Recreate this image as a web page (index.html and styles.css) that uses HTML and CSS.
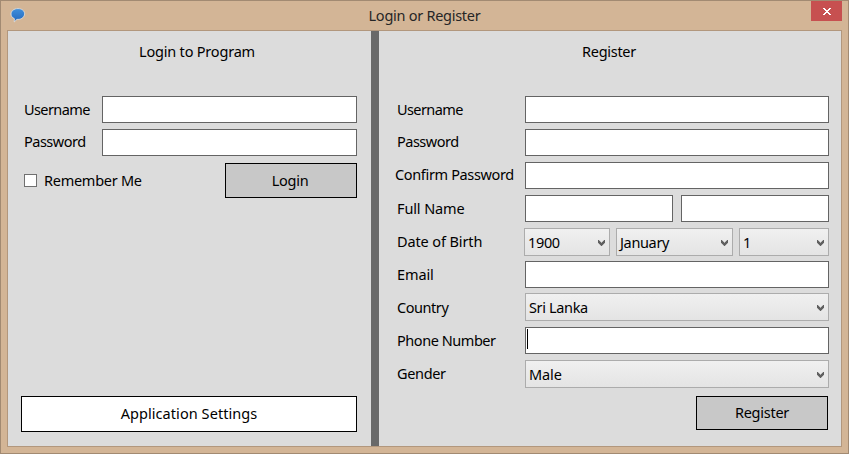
FILE: index.html
```html
<!DOCTYPE html>
<html lang="en">
<head>
<meta charset="utf-8">
<title>Login or Register</title>
<link rel="stylesheet" href="styles.css">
</head>
<body>
<div class="window">
  <header class="titlebar">
    <svg class="app-icon" width="16" height="16" viewBox="0 0 16 16"><defs><linearGradient id="bubble" x2="0" y2="1"><stop stop-color="#3f8fdc"/><stop offset="1" stop-color="#2468bd"/></linearGradient></defs><path d="M8 .6C11.800 .6 14.600 2.800 14.600 5.800S11.800 11.400 8 11.400L7 11.300 4.200 14 4.400 10.700C2.300 9.800 1 8 1 6 1 2.900 4 .6 8 .6Z" fill="url(#bubble)" stroke="#e9e4df" stroke-width=".8"/></svg>
    <h1 class="title">Login or Register</h1>
    <button class="close" aria-label="Close"><svg width="8" height="7" viewBox="0 0 8 7" shape-rendering="crispEdges"><path d="M0 0h2v1h1v1h2V1h1V0h2v1H7v1H6v1H5v1h1v1h1v1h1v1H6V6H5V5H3v1H2v1H0V6h1V5h1V4h1V3H2V2H1V1H0z" fill="#fff"/></svg></button>
  </header>
  <main class="client">
    <section class="pane login">
      <h2 class="heading">Login to Program</h2>
      <div class="rows">
        <div class="row"><label class="tight">Username</label><div class="field"></div></div>
        <div class="row high"><label>Password</label><div class="field"></div></div>
      </div>
      <div class="actions">
        <label class="remember"><span class="checkbox"></span><span>Remember Me</span></label>
        <button class="button"><span>Login</span></button>
      </div>
      <button class="button settings"><span>Application Settings</span></button>
    </section>
    <div class="divider"></div>
    <section class="pane register">
      <h2 class="heading">Register</h2>
      <div class="rows">
        <div class="row"><label class="tight">Username</label><div class="field"></div></div>
        <div class="row high"><label>Password</label><div class="field"></div></div>
        <div class="row high"><label class="wide">Confirm Password</label><div class="field"></div></div>
        <div class="row"><label class="loose">Full Name</label><div class="field"></div><div class="field second"></div></div>
        <div class="row"><label class="loose">Date of Birth</label>
          <div class="dates">
            <div class="combo"><span>1900</span><svg class="arrow" width="7" height="6"><use href="#chev"/></svg></div>
            <div class="combo"><span>January</span><svg class="arrow" width="7" height="6"><use href="#chev"/></svg></div>
            <div class="combo"><span>1</span><svg class="arrow" width="7" height="6"><use href="#chev"/></svg></div>
          </div>
        </div>
        <div class="row"><label class="loose">Email</label><div class="field"></div></div>
        <div class="row"><label class="snug">Country</label><div class="combo raised"><span>Sri Lanka</span><svg class="arrow" width="7" height="6"><use href="#chev"/></svg></div></div>
        <div class="row"><label class="snug">Phone Number</label><div class="field"><i class="caret"></i></div></div>
        <div class="row"><label>Gender</label><div class="combo"><span class="loose">Male</span><svg class="arrow" width="7" height="6"><use href="#chev"/></svg></div></div>
      </div>
      <button class="button submit"><span>Register</span></button>
    </section>
  </main>
</div>
<svg class="defs" width="0" height="0"><defs><path id="chev" d="M0 0H1V1H2V2H3V3H4V2H5V1H6V0H7V3H6V4H5V5H4V6H3V5H2V4H1V3H0Z" fill="#606060" stroke="#606060" stroke-width=".3"/></defs></svg>
</body>
</html>
```
FILE: styles.css
```css
* { box-sizing: border-box; }
body {
  margin: 0;
  font-family: "Noto Sans", "Open Sans", sans-serif;
  font-size: 14.5px;
  line-height: 20px;
  letter-spacing: -0.35px;
  color: #000;
  overflow: hidden;
}
.window {
  width: 849px;
  height: 454px;
  display: flex;
  flex-direction: column;
  padding: 0 6px 6px;
  border: 1px solid #a28a72;
  background: #d3b596;
}
.titlebar {
  height: 29px;
  flex: none;
  display: grid;
  grid-template-columns: 31px 1fr 31px;
}
.app-icon { margin: 7px 0 0 3px; }
.title {
  margin: 4px 0 0;
  font-size: inherit;
  font-weight: 400;
  letter-spacing: -0.27px;
  text-align: center;
  color: #262626;
}
.close {
  height: 20px;
  padding: 1px 0 0 1px;
  border: 0;
  background: #c75050;
  display: flex;
  align-items: center;
  justify-content: center;
}
.client {
  flex: 1;
  display: grid;
  grid-template-columns: 363px 8px 1fr;
  border: 1px solid #b2977d;
  background: #dcdcdc;
}
.divider { background: #696969; }
.pane { display: flex; flex-direction: column; }
.heading {
  margin: 10px 0 35px;
  font-size: inherit;
  font-weight: 400;
  letter-spacing: -0.2px;
  text-align: center;
}
.login .heading { padding-left: 15px; }
.register .heading { padding-right: 2px; letter-spacing: -0.3px; }
.row {
  height: 33px;
  display: grid;
  align-items: start;
}
.row label { padding-top: 3px; }
.row.high label { padding-top: 2px; letter-spacing: -0.5px; }
.row .tight { letter-spacing: -0.6px; }
.row .snug { letter-spacing: -0.45px; }
.row .loose { letter-spacing: -0.12px; }
.login .row { grid-template-columns: 78px 255px; padding-left: 16px; }
.register .row { grid-template-columns: 128px 304px; padding-left: 18px; }
.register .row:has(.second) { grid-template-columns: 128px 148px 148px; column-gap: 0; }
.second { margin-left: 8px; width: 148px; }
.row.high .wide { margin-left: -2px; white-space: nowrap; letter-spacing: -0.35px; }
.field { height: 27px; border: 1px solid #646464; background: #fff; }
.caret { display: block; width: 1px; height: 20px; margin: 1px; background: #000; }
.dates {
  display: grid;
  grid-template-columns: 86px 117px 90px;
  gap: 6px;
  margin-left: -1px;
}
.combo {
  height: 28px;
  padding: 0 4px 0 3px;
  border: 1px solid #acacac;
  background: linear-gradient(#f0f0f0, #e4e4e4);
  display: flex;
  align-items: center;
  justify-content: space-between;
}
.combo span { margin-top: -1px; }
.arrow { margin-top: 2px; }
.raised { margin-top: -1px; }
.button {
  width: 132px;
  height: 35px;
  padding: 0 2px 2px 0;
  border: 1px solid #000;
  background: #c8c8c8;
  font: inherit;
  letter-spacing: -0.25px;
  color: #000;
}
.actions {
  display: flex;
  justify-content: space-between;
  padding: 1px 14px 0 16px;
}
.remember { display: flex; padding-top: 7px; gap: 7px; letter-spacing: -0.27px; }
.checkbox { width: 13px; height: 13px; margin-top: 4px; border: 1px solid #707070; background: #fff; }
.settings {
  width: 336px;
  height: 36px;
  padding-right: 0;
  margin: auto 0 14px 13px;
  background: #fff;
  letter-spacing: 0.07px;
}
.submit { height: 34px; padding-right: 0; margin: 3px 0 0 317px; }
.defs { position: absolute; }
```
